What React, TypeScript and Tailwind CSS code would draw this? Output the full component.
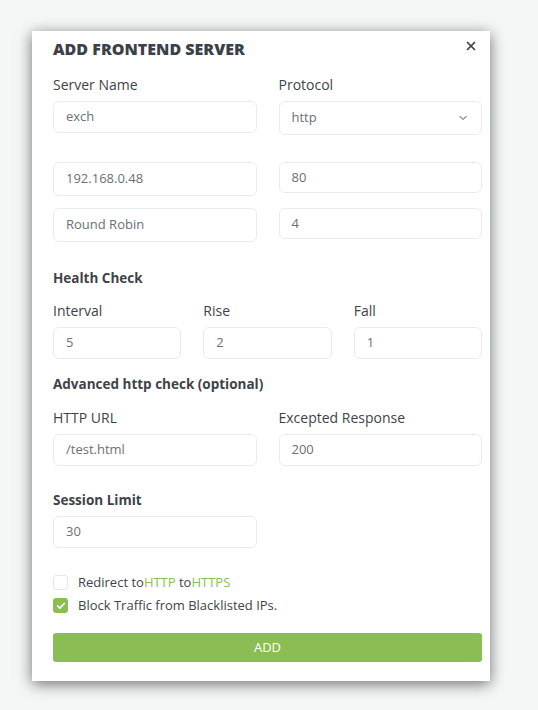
import { ChevronDown, X, Check } from 'lucide-react';

const font = { fontFamily: '"Open Sans", "Noto Sans", sans-serif' };

function Field({ value, className = 'h-[32px]' }: { value: string; className?: string }) {
  return (
    <div className={`flex items-center rounded-md border border-[#e8ecef] bg-white px-3 text-[13px] text-[#6b7079] ${className}`}>
      {value}
    </div>
  );
}

function Label({ children }: { children: React.ReactNode }) {
  return <div className="mb-[8px] text-[14px] leading-[16px] text-[#3e434a]">{children}</div>;
}

function Heading({ children }: { children: React.ReactNode }) {
  return <div className="text-[13.5px] font-bold leading-[16px] text-[#3e434a]">{children}</div>;
}

export default function App() {
  return (
    <div className="min-h-[710px] w-[538px] bg-[#f4f7f6] pt-[31px] pl-[32px]" style={font}>
      <div className="relative w-[458px] h-[650px] bg-white pl-[21px] pr-[8px] pt-[8px] shadow-[0_3px_14px_rgba(0,0,0,0.55)]">
        <button className="absolute right-[12px] top-[8px] text-[#3e434a]">
          <X size={14} strokeWidth={3} />
        </button>
        <h2 className="text-[16px] font-extrabold leading-[20px] text-[#3b4149]">ADD FRONTEND SERVER</h2>

        <div className="mt-[18px] grid grid-cols-2 gap-x-[22px]">
          <div>
            <Label>Server Name</Label>
            <Field value="exch" />
          </div>
          <div>
            <Label>Protocol</Label>
            <div className="flex h-[34px] items-center justify-between rounded-md border border-[#e8ecef] bg-white px-3 text-[13px] text-[#6b7079]">
              <span>http</span>
              <ChevronDown size={12} strokeWidth={2} className="text-[#3e434a]" />
            </div>
          </div>
        </div>

        <div className="mt-[27px] grid grid-cols-2 gap-x-[22px] gap-y-[12px]">
          <Field value="192.168.0.48" className="h-[34px]" />
          <Field value="80" className="h-[31px] self-start" />
          <Field value="Round Robin" className="h-[34px]" />
          <Field value="4" className="h-[31px] self-start" />
        </div>

        <div className="mt-[28px]">
          <Heading>Health Check</Heading>
        </div>
        <div className="mt-[17px] grid grid-cols-3 gap-x-[22px]">
          <div>
            <Label>Interval</Label>
            <Field value="5" />
          </div>
          <div>
            <Label>Rise</Label>
            <Field value="2" />
          </div>
          <div>
            <Label>Fall</Label>
            <Field value="1" />
          </div>
        </div>

        <div className="mt-[17px]">
          <Heading>Advanced http check (optional)</Heading>
        </div>
        <div className="mt-[18px] grid grid-cols-2 gap-x-[22px]">
          <div>
            <Label>HTTP URL</Label>
            <Field value="/test.html" />
          </div>
          <div>
            <Label>Excepted Response</Label>
            <Field value="200" />
          </div>
        </div>

        <div className="mt-[26px]">
          <Heading>Session Limit</Heading>
        </div>
        <div className="mt-[8px] grid grid-cols-2 gap-x-[22px]">
          <Field value="30" />
        </div>

        <div className="mt-[25px] flex flex-col gap-[4px] text-[13px] leading-[19px] text-[#3e434a]">
          <label className="flex items-center gap-[10px]">
            <span className="h-[15px] w-[15px] rounded-[3px] border border-[#e3e7ea] bg-white" />
            <span>
              Redirect to<span className="text-[#8bbd55]">HTTP</span> to<span className="text-[#8bbd55]">HTTPS</span>
            </span>
          </label>
          <label className="flex items-center gap-[10px]">
            <span className="flex h-[15px] w-[15px] items-center justify-center rounded-[3px] bg-[#8bbd55] text-white">
              <Check size={10} strokeWidth={4} />
            </span>
            <span>Block Traffic from Blacklisted IPs.</span>
          </label>
        </div>

        <button className="mt-[18px] flex h-[29px] w-[429px] items-center justify-center rounded-[3px] bg-[#8bbd55] text-[13px] font-medium text-white">
          ADD
        </button>
      </div>
    </div>
  );
}
